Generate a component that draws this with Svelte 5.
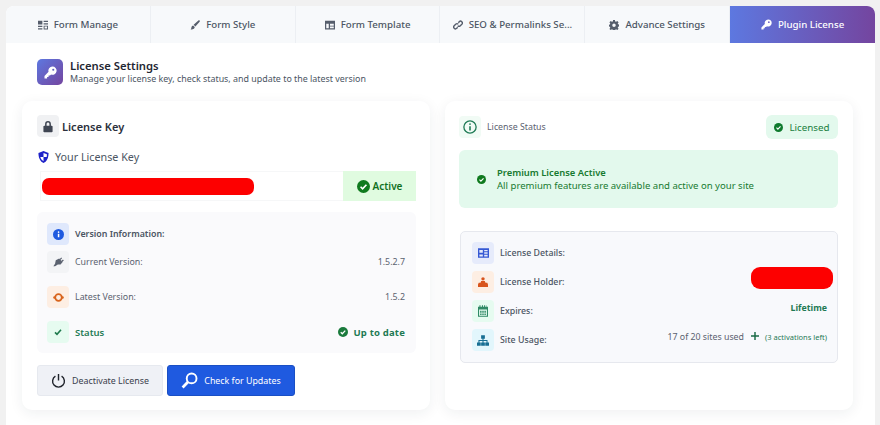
<script lang="ts">
  const tabs = [
    { label: 'Form Manage', icon: 'manage' },
    { label: 'Form Style', icon: 'brush' },
    { label: 'Form Template', icon: 'template' },
    { label: 'SEO & Permalinks Se...', icon: 'link' },
    { label: 'Advance Settings', icon: 'gear' },
    { label: 'Plugin License', icon: 'key', active: true },
  ]
</script>

{#snippet check(size: number, color: string)}
  <svg width={size} height={size} viewBox="0 0 16 16" class="glyph">
    <circle cx="8" cy="8" r="8" fill={color} />
    <path d="M4.4 8.3l2.5 2.5 4.7-5" fill="none" stroke="#fff" stroke-width="2" />
  </svg>
{/snippet}

{#snippet key(size: number, color: string, hole: string)}
  <svg width={size} height={size} viewBox="0 0 16 16" class="glyph">
    <path d="M10.3 0.6a5.1 5.1 0 1 1-1.6 9.9L7.4 11.8H5.6v1.8H3.8v1.8H0.6v-3.2l5-5a5.1 5.1 0 0 1 4.7-6.6z" fill={color} />
    <circle cx="11.4" cy="4.6" r="1.3" fill={hole} />
  </svg>
{/snippet}

{#snippet tabIcon(name: string)}
  {#if name === 'key'}
    {@render key(11, '#fff', '#6d62c4')}
  {:else}
    <svg width="10" height="10" viewBox="0 0 16 16" class="glyph" fill="#565e6c">
      {#if name === 'manage'}
        <path d="M0 1h7v6H0zM9 1h7v2H9zM9 5h7v2H9zM0 9h7v2H0zM0 13h7v2H0z" />
        <path d="M9 9h7v6H9zM10.5 10.5v3h4v-3z" fill-rule="evenodd" />
      {:else if name === 'brush'}
        <path d="M15.4 0.6c.6.6.5 1.4 0 2L8.6 10.4 5.8 7.6 13.4 0.8c.6-.5 1.4-.8 2-.2zM5 8.6l2.6 2.6C7.4 13.6 5.4 15.4 1 15c1.400-1 1-2.400 1.400-3.800C2.800 9.800 3.800 8.800 5 8.600z" />
      {:else if name === 'template'}
        <path d="M0 1h16v14H0zM2 6v7h4V6zM8 6v3h6V6zM8 10.500V13h6v-2.500z" fill-rule="evenodd" />
      {:else if name === 'link'}
        <g fill="none" stroke="#565e6c" stroke-width="2.200">
          <path d="M8.500 4.500l1.500-1.800a2.900 2.900 0 0 1 4.100 4.100l-2.400 2.400a2.900 2.900 0 0 1-4.100 0" />
          <path d="M7.500 11.500l-1.500 1.800a2.900 2.900 0 0 1-4.100-4.100l2.400-2.400a2.900 2.900 0 0 1 4.100 0" />
        </g>
      {:else if name === 'gear'}
        <path fill-rule="evenodd" d="M6.500 0h3l.4 2.200 1.500.6L13.200 1.500l2.100 2.100-1.300 1.800.6 1.500 2.200.4v3l-2.200.4-.6 1.500 1.300 1.800-2.100 2.100-1.800-1.300-1.500.6-.4 2.200h-3l-.4-2.200-1.500-.6-1.800 1.300L.7 14.200 2 12.400l-.6-1.500L0 10.500v-3l1.400-.4.600-1.500L.7 3.600l2.100-2.100 1.800 1.300 1.500-.6zM8 5.500a2.800 2.800 0 1 0 0 5.600 2.800 2.800 0 0 0 0-5.600z" />
      {/if}
    </svg>
  {/if}
{/snippet}

<div class="page">
  <nav class="tabs">
    {#each tabs as tab}
      <div class="tab" class:active={tab.active}>
        {@render tabIcon(tab.icon)}
        <span>{tab.label}</span>
      </div>
    {/each}
  </nav>

  <main class="content">
    <header class="head">
      <div class="head-icon">{@render key(13, '#fff', '#5f62b8')}</div>
      <div class="head-text">
        <h1>License Settings</h1>
        <p>Manage your license key, check status, and update to the latest version</p>
      </div>
    </header>

    <div class="cards">
      <section class="card left">
        <div class="card-title">
          <span class="box grey">
            <svg width="10" height="13" viewBox="0 0 12 14" fill="#3f4552">
              <path fill-rule="evenodd" d="M2.500 6V4a3.500 3.500 0 0 1 7 0v2h1a1 1 0 0 1 1 1v6a1 1 0 0 1-1 1h-9a1 1 0 0 1-1-1V7a1 1 0 0 1 1-1zm1.800 0h3.400V4a1.700 1.700 0 0 0-3.400 0z" />
            </svg>
          </span>
          <h2>License Key</h2>
        </div>

        <div class="field-label">
          <svg width="11" height="12" viewBox="0 0 12 13" class="glyph">
            <path d="M6 0l5.500 2c0 5-1.500 9-5.500 11C2 11 .5 7 .5 2z" fill="#1e22c8" />
            <path d="M6 2v4.500H2.500C3 8.500 4.200 10 6 11V6.500h3.500c.2-1 .2-2 .2-3z" fill="#fff" />
          </svg>
          Your License Key
        </div>

        <div class="key-field">
          <div class="key-value"><span class="redact key-redact"></span></div>
          <div class="key-state">{@render check(13, '#0f7a1e')}<b>Active</b></div>
        </div>

        <div class="version">
          <div class="v-row head-row">
            <span class="box blue">
              <svg width="11" height="11" viewBox="0 0 16 16" class="glyph">
                <circle cx="8" cy="8" r="8" fill="#1f5ae0" />
                <rect x="7" y="7" width="2.200" height="5" fill="#fff" />
                <circle cx="8.100" cy="4.600" r="1.200" fill="#fff" />
              </svg>
            </span>
            <strong>Version Information:</strong>
          </div>
          <div class="v-row gap1">
            <span class="box pale">
              <svg width="11" height="10" viewBox="0 0 16 14" fill="#5b6270" class="glyph">
                <path d="M4 4.500L9 2l5 5-3 3.500H7L3 13H0.500L3 9.500z" />
                <path d="M9.500 3L12 0.500l1.200 1.200L10.800 4zM12 5.500l2.500-2 1.200 1.200L13.300 7z" />
              </svg>
            </span>
            <span class="v-label">Current Version:</span>
            <span class="v-value">1.5.2.7</span>
          </div>
          <div class="v-row gap2">
            <span class="box peach">
              <svg width="11" height="11" viewBox="0 0 16 16" class="glyph">
                <circle cx="8" cy="8" r="4.800" fill="none" stroke="#d8641d" stroke-width="2.600" />
                <circle cx="2" cy="8" r="1.700" fill="#d8641d" />
                <circle cx="14" cy="8" r="1.700" fill="#d8641d" />
              </svg>
            </span>
            <span class="v-label">Latest Version:</span>
            <span class="v-value">1.5.2</span>
          </div>
          <div class="v-row gap2">
            <span class="box mint">
              <svg width="8" height="8" viewBox="0 0 12 12" fill="none" stroke="#1f7a4d" stroke-width="2.400" class="glyph">
                <path d="M1.500 6.500l3 3 6-7" />
              </svg>
            </span>
            <strong class="ok">Status</strong>
            <span class="v-value uptodate">{@render check(10, '#1a7a3c')}<b>Up to date</b></span>
          </div>
        </div>

        <div class="actions">
          <button class="btn plain">
            <svg width="15" height="15" viewBox="0 0 16 16" fill="none" stroke="#20242c" stroke-width="1.500" class="glyph">
              <path d="M8 1v7M4.700 3.400a6.300 6.300 0 1 0 6.600 0" />
            </svg>
            Deactivate License
          </button>
          <button class="btn primary">
            <svg width="17" height="17" viewBox="0 0 16 16" fill="none" stroke="#fff" stroke-width="1.800" class="glyph">
              <circle cx="10" cy="6" r="4.600" />
              <path d="M6.500 9.500L1.500 14.500" stroke-width="2.600" />
            </svg>
            Check for Updates
          </button>
        </div>
      </section>

      <section class="card right">
        <div class="status-head">
          <span class="box palemint">
            <svg width="14" height="14" viewBox="0 0 16 16" fill="none" stroke="#1f7a55" stroke-width="1.500" class="glyph">
              <circle cx="8" cy="8" r="7" />
              <path d="M8 7v5" stroke-width="1.800" />
              <circle cx="8" cy="4.600" r="1" fill="#1f7a55" stroke="none" />
            </svg>
          </span>
          <span class="status-title">License Status</span>
          <span class="pill">{@render check(9, '#0f7a2e')}Licensed</span>
        </div>

        <div class="banner">
          {@render check(9, '#0f7a1e')}
          <div>
            <strong>Premium License Active</strong>
            <p>All premium features are available and active on your site</p>
          </div>
        </div>

        <div class="details">
          <div class="d-row">
            <span class="box lav">
              <svg width="11" height="10" viewBox="0 0 16 14" fill="#3558d4" class="glyph">
                <path fill-rule="evenodd" d="M0 0h16v14H0zM2 2.500v4h5v-4zM9 2.500v2h5v-2zM9 6v2h5V6zM2 9v3h5V9zM9 9.500V12h5V9.500z" />
              </svg>
            </span>
            <span class="d-label">License Details:</span>
          </div>
          <div class="d-row">
            <span class="box peach">
              <svg width="10" height="10" viewBox="0 0 14 14" fill="#d8541d" class="glyph">
                <circle cx="7" cy="2.600" r="2.400" />
                <path d="M4.500 5.500h5L10.500 8H13l1 2.500V14H0v-3.500L1 8h2.500z" />
              </svg>
            </span>
            <span class="d-label">License Holder:</span>
            <span class="redact holder-redact"></span>
          </div>
          <div class="d-row">
            <span class="box mint">
              <svg width="10" height="12" viewBox="0 0 14 16" fill="#2f8a65" class="glyph">
                <path fill-rule="evenodd" d="M2 0h1.500v2h2V0H7v2h1.500V0H10v2h2V0h.5v2H14v14H0V2h2zM1.500 6v8.500h11V6zM3 7.500h2v3H3zM6 7.500h2v3H6zM9 7.500h2v3H9zM3 11.500h2v2H3zM6 11.500h2v2H6zM9 11.500h2v2H9z" />
              </svg>
            </span>
            <span class="d-label">Expires:</span>
            <strong class="lifetime">Lifetime</strong>
          </div>
          <div class="d-row">
            <span class="box sky">
              <svg width="12" height="11" viewBox="0 0 16 14" fill="#166e93" class="glyph">
                <path d="M5.500 0h5v4.500H8.700V6.300H14V9.500h2V14h-5V9.500h1.700V7.700H8.700v1.800h1.800V14h-5V9.500h1.800V7.700H3.300v1.800H5V14H0V9.500h1.900V6.300h5.400V4.500H5.500z" />
              </svg>
            </span>
            <span class="d-label">Site Usage:</span>
            <span class="usage">
              17 of 20 sites used
              <svg width="8" height="8" viewBox="0 0 10 10" fill="none" stroke="#1a6b46" stroke-width="1.800" class="plus">
                <path d="M5 0v10M0 5h10" />
              </svg>
              <small>(3 activations left)</small>
            </span>
          </div>
        </div>
      </section>
    </div>
  </main>
</div>

<style>
  :global(body) {
    margin: 0;
    background: #f1f1f1;
    font-family: 'Noto Sans', 'Open Sans', sans-serif;
  }

  .page {
    width: 869px;
    height: 419px;
    margin: 6px 0 0 6px;
    background: #fff;
    border-radius: 8px 8px 0 0;
    overflow: hidden;
  }

  .glyph {
    flex: none;
    display: block;
  }

  /* ── Tabs ────────────────────────────────────────── */

  .tabs {
    display: grid;
    grid-template-columns: repeat(6, 1fr);
    height: 37px;
    background: #f7f9fb;
  }

  .tab {
    display: flex;
    align-items: center;
    justify-content: center;
    gap: 6px;
    border-right: 1px solid #eceff3;
    font-size: 9.700px;
    font-weight: 500;
    color: #4b5563;
    white-space: nowrap;
  }

  .tab.active {
    background: linear-gradient(90deg, #5d78e0, #74459f);
    border-right: 0;
    border-radius: 0 6px 0 0;
    color: #fff;
  }

  /* ── Header ──────────────────────────────────────── */

  .content {
    padding: 16px 22px 0 16px;
  }

  .head {
    display: flex;
    align-items: center;
    gap: 7px;
    margin-left: 15px;
    height: 26px;
  }

  .head-icon {
    width: 26px;
    height: 26px;
    border-radius: 5px;
    background: linear-gradient(135deg, #5d78e0, #74459f);
    display: flex;
    align-items: center;
    justify-content: center;
  }

  h1 {
    margin: 0;
    font-size: 11.250px;
    line-height: 14px;
    font-weight: 600;
    color: #1f2733;
  }

  .head-text p {
    margin: 0;
    font-size: 8.900px;
    line-height: 12px;
    color: #4b5563;
  }

  /* ── Cards ───────────────────────────────────────── */

  .cards {
    display: grid;
    grid-template-columns: 408px 408px;
    gap: 15px;
    margin-top: 16px;
  }

  .card {
    height: 309px;
    box-sizing: border-box;
    background: #fff;
    border-radius: 10px;
    box-shadow: 0 3px 14px rgba(30, 40, 60, 0.07);
  }

  .left {
    padding: 14px 14px 0 15px;
  }

  .right {
    padding: 14px 15px 0 14px;
  }

  .box {
    flex: none;
    width: 22px;
    height: 22px;
    border-radius: 4px;
    display: flex;
    align-items: center;
    justify-content: center;
  }

  .grey { background: #f0f1f3; }
  .blue { background: #dfe8fc; }
  .pale { background: #f3f4f6; }
  .peach { background: #fdeee3; }
  .mint { background: #e6fbf0; }
  .palemint { background: #f1fbf5; }
  .lav { background: #e6ebfb; }
  .sky { background: #e2f6fc; }

  .card-title {
    display: flex;
    align-items: center;
    gap: 3px;
  }

  h2 {
    margin: 0;
    font-size: 11px;
    font-weight: 600;
    color: #2b313c;
  }

  .field-label {
    display: flex;
    align-items: center;
    gap: 6px;
    margin: 12px 0 0 1px;
    height: 15px;
    font-size: 10.750px;
    color: #4b5563;
  }

  .key-field {
    display: flex;
    height: 30px;
    margin: 7px 0 0 3px;
  }

  .key-value {
    flex: 1;
    display: flex;
    align-items: center;
    padding-left: 1px;
    border: 1px solid #f6f7f8;
    border-right: 0;
  }

  .redact {
    display: block;
    background: #fd0000;
  }

  .key-redact {
    width: 212px;
    height: 17px;
    border-radius: 7px;
  }

  .key-state {
    width: 73px;
    background: #e0fbe0;
    display: flex;
    align-items: center;
    justify-content: center;
    gap: 3px;
    font-size: 10px;
    color: #10701e;
  }

  .key-state b {
    font-weight: 600;
  }

  /* ── Version box ─────────────────────────────────── */

  .version {
    margin-top: 11px;
    height: 141px;
    box-sizing: border-box;
    padding: 11px 11px 0 10px;
    background: #fafafc;
    border-radius: 6px;
    font-size: 8.850px;
  }

  .v-row {
    display: flex;
    align-items: center;
    gap: 6px;
    height: 22px;
  }

  .gap1 { margin-top: 6px; }
  .gap2 { margin-top: 13px; }

  .v-row strong {
    font-weight: 600;
    color: #4b5563;
  }

  .v-row .ok {
    color: #1f7a55;
    font-size: 9.500px;
  }

  .v-label {
    color: #5b6270;
  }

  .v-value {
    margin-left: auto;
    color: #5b6270;
  }

  .uptodate {
    display: flex;
    align-items: center;
    gap: 5px;
    color: #1f7a55;
    font-size: 9.500px;
    letter-spacing: 0.02em;
  }

  .uptodate b {
    font-weight: 700;
  }

  /* ── Buttons ─────────────────────────────────────── */

  .actions {
    display: flex;
    gap: 4px;
    margin-top: 12px;
  }

  .btn {
    display: flex;
    align-items: center;
    justify-content: center;
    gap: 6px;
    height: 31px;
    padding: 0;
    border-radius: 3px;
    font: inherit;
    font-size: 8.850px;
  }

  .plain {
    width: 126px;
    background: #eff1f6;
    border: 1px solid #e6e9ef;
    color: #3a404c;
  }

  .primary {
    width: 128px;
    background: #1f5ae0;
    border: 1px solid #1a4fc4;
    color: #fff;
  }

  /* ── Status card ─────────────────────────────────── */

  .status-head {
    display: flex;
    align-items: center;
    height: 24px;
    gap: 6px;
  }

  .status-title {
    font-size: 8.800px;
    color: #5b6270;
  }

  .pill {
    margin-left: auto;
    width: 72px;
    height: 24px;
    border-radius: 6px;
    background: #e3f9ed;
    color: #1a8040;
    font-size: 9.800px;
    display: flex;
    align-items: center;
    justify-content: center;
    gap: 6px;
  }

  .banner {
    display: flex;
    align-items: center;
    gap: 11px;
    height: 58px;
    margin-top: 11px;
    padding-left: 18px;
    background: #e3f9ed;
    border-radius: 6px;
    color: #177a30;
    font-size: 9.550px;
    line-height: 13px;
  }

  .banner strong {
    font-size: 9.400px;
    font-weight: 600;
    display: block;
  }

  .banner p {
    margin: 0;
  }

  .details {
    margin-top: 23px;
    margin-left: 1px;
    height: 132px;
    box-sizing: border-box;
    padding: 10px 4px 0 11px;
    display: flex;
    flex-direction: column;
    gap: 7px;
    background: #f8f9fc;
    border: 1px solid #e6e8ee;
    border-radius: 5px;
  }

  .d-row {
    display: flex;
    align-items: center;
    gap: 6px;
    height: 22px;
    font-size: 8.800px;
  }

  .d-label {
    font-weight: 500;
    color: #4b5563;
  }

  .holder-redact {
    margin-left: auto;
    width: 82px;
    height: 22px;
    border-radius: 9px;
    transform: translateY(-4px);
  }

  .lifetime {
    margin: 0 6px 7px auto;
    font-weight: 700;
    color: #1f7a55;
  }

  .usage {
    margin: 0 6px 7px auto;
    display: flex;
    align-items: center;
    gap: 6px;
    color: #5b6270;
  }

  .plus {
    margin: -2px 0 0 1px;
  }

  .usage small {
    font-size: 7.500px;
    color: #1f7a55;
  }
</style>
